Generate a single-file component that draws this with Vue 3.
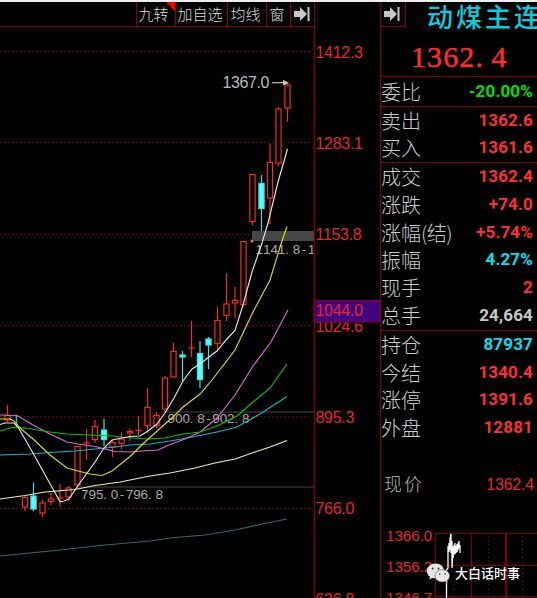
<script setup>
const tools = [
  { label: '九转', width: 39, flagged: true },
  { label: '加自选', width: 52 },
  { label: '均线', width: 39 },
  { label: '窗', width: 24 },
]

const quoteGroups = [
  { height: 30, rows: [{ label: '委比', value: '-20.00%', tone: 'green' }] },
  {
    height: 56,
    rows: [
      { label: '卖出', value: '1362.6', tone: 'red' },
      { label: '买入', value: '1361.6', tone: 'red' },
    ],
  },
  {
    height: 168,
    rows: [
      { label: '成交', value: '1362.4', tone: 'red' },
      { label: '涨跌', value: '+74.0', tone: 'red' },
      { label: '涨幅', note: '(结)', value: '+5.74%', tone: 'red' },
      { label: '振幅', value: '4.27%', tone: 'cyan' },
      { label: '现手', value: '2', tone: 'red' },
      { label: '总手', value: '24,664', tone: 'grey' },
    ],
  },
  {
    height: 112,
    rows: [
      { label: '持仓', value: '87937', tone: 'cyan' },
      { label: '今结', value: '1340.4', tone: 'red' },
      { label: '涨停', value: '1391.6', tone: 'red' },
      { label: '外盘', value: '12881', tone: 'red' },
    ],
  },
]

const bigPrice = '1362.4'.split('')

const gridY = [51.5, 142.5, 234.5, 325.5, 416.5, 508.5]
const axis = [
  ['1412.3', 57.5], ['1283.1', 149], ['1153.8', 240], ['1024.6', 331.5],
  ['895.3', 422.5], ['766.0', 514], ['636.8', 605],
]

// x, high, top, bottom, low, kind (u = rising, d = falling, c = cross)
const candles = [
  [287.5, 83, 85, 108, 122, 'u'], [278.5, 107, 109, 163, 166, 'u'],
  [270, 143.5, 162.5, 198, 224, 'u'], [261.5, 175, 183.5, 208.5, 231, 'd'],
  [252.5, 174, 174.5, 221.5, 225.5, 'u'], [243.5, 241, 241.5, 304.5, 305, 'u'],
  [235, 287, 300.5, 303, 318, 'u'], [226.5, 273.5, 304, 315.5, 321, 'u'],
  [217.5, 307, 320.5, 343.5, 350, 'u'], [208.5, 337, 339, 345, 369, 'd'],
  [200, 341, 353.5, 379.5, 388.5, 'd'], [191.5, 321, 348, 348, 357, 'c'],
  [182.5, 351, 355, 357, 381, 'd'], [173.5, 343, 351.5, 377, 377, 'u'],
  [165, 376, 378, 409, 412, 'u'], [156.5, 412, 415.5, 425.5, 428, 'u'],
  [147.5, 388, 407.5, 425.5, 433, 'u'], [138.5, 416, 430.5, 430.5, 435, 'c'],
  [130, 428.5, 431.5, 433, 441, 'u'], [121.5, 432, 439, 443.5, 449, 'u'],
  [112.5, 440, 442.5, 447, 457, 'u'], [104, 418.5, 430, 439.5, 446, 'd'],
  [95, 420, 426.5, 439.5, 443, 'u'], [86.5, 429, 443, 443, 460, 'c'],
  [77.5, 446, 446.5, 485, 488, 'u'], [68.5, 486, 488, 497, 501, 'u'],
  [60, 484, 498, 498, 507, 'c'], [51, 493, 499, 501.5, 505.5, 'u'],
  [42.5, 499.5, 503, 513, 517, 'u'], [33.5, 482.5, 496, 509, 511, 'd'],
  [25, 496, 497.5, 507, 511, 'u'], [7.5, 405, 415.5, 420, 422, 'u'],
]

const averages = [
  { color: '#2c6a70', points: '0,556 60,550 100,545.5 150,541 170,538 205,535 235,530 260,524.5 287,519' },
  { color: '#eeeea8', points: '0,499 25,495.5 45,492 75,489.5 95,485.5 120,482 150,476 170,473 195,468 215,463 235,459 255,452 270,447 287,440.5' },
  { color: '#10b8cc', points: '0,455 30,454 50,452.5 75,451 100,448.5 115,447 130,445 150,444 170,441 195,436.5 217,432 237,427 260,414 287,396.5' },
  { color: '#d868d8', points: '0,415 17,415.5 33,425 50,434 67,442 78,444 95,446.5 115,451.5 130,452 143,451 158,450 170,444.5 185,439 200,432 217,418 235,395 253,366 271,342 288,310' },
  { color: '#00c400', points: '0,431 12,427.5 25,428 50,432 67,434 100,435.5 113,436 125,437.5 148,439 165,438 180,434.5 200,432 217,426 237,416 253,402 270,388 287,364' },
  { color: '#e0dc00', points: '0,419 10,419 14,421 20,428 33,439 50,455 67,468 78,471 90,474 102,475.5 112,471 130,456.5 147,440 165,424 174,416 183,407 200,394 212,380 235,350 253,312 270,280 281,244 287,226.5' },
  { color: '#e4e4e4', points: '0,424.5 5,423 14,423 18,427 33,453 60,501.7 64,501 69,499 77,487 95,462 104,448 112,440 122,438 130,436.5 140,436 148,431 157,424 165,413 174,398 183,381 192,369 200,364 209,357 217,351 226,340 235,330.5 243,305 252,272 262,243 268,223 278,182 287.5,149' },
]

const marks = [
  { text: '1141.8-1', x: 255.5, y: 253.5 },
  { text: '900.8-902.8', x: 167.5, y: 423 },
  { text: '795.0-796.8', x: 81, y: 499 },
]
// Fixed-pitch cells; the narrow hyphen is centred in its cell.
const spread = (m) =>
  m.text.split('').map((ch, i) => m.x + i * 7.45 + (ch === '-' ? 1.6 : 0)).join(' ')
</script>

<template>
  <main class="terminal">
    <section class="chart">
      <nav class="toolbar">
        <span v-for="t in tools" :key="t.label" class="tool" :class="{ flagged: t.flagged }" :style="{ width: t.width + 'px' }">{{ t.label }}</span>
        <span class="tool arrow">
          <svg width="16" height="16" viewBox="0 0 16 16"><path d="M0 5h6V1l7 7-7 7v-4H0zM13.5 1h2v14h-2z" /></svg>
        </span>
      </nav>
      <svg class="plot" width="380" height="571" viewBox="0 27 380 571">
        <defs>
          <clipPath id="plotArea"><rect x="0" y="27" width="313.5" height="571" /></clipPath>
        </defs>
        <line v-for="y in gridY" :key="y" class="dots" x1="0" x2="312" :y1="y" :y2="y" />
        <path class="level" d="M163 412H314M77 487H314" />
        <rect class="band" x="252" y="231" width="62" height="10" />
        <g v-for="c in candles" :key="c[0]" :class="c[5] === 'd' ? 'down' : 'up'">
          <line :x1="c[0]" :x2="c[0]" :y1="c[1]" :y2="c[2]" />
          <line :x1="c[0]" :x2="c[0]" :y1="c[3]" :y2="c[4]" />
          <line v-if="c[5] === 'c'" :x1="c[0] - 3.2" :x2="c[0] + 3.2" :y1="c[2]" :y2="c[2]" />
          <rect v-else :x="c[0] - 2.6" :y="c[2]" width="5.2" :height="c[3] - c[2]" />
        </g>
        <path class="teal-tick" d="M16.5 415V427" />
        <g clip-path="url(#plotArea)">
          <text v-for="m in marks" :key="m.text" class="mark" :x="spread(m)" :y="m.y">{{ m.text }}</text>
        </g>
        <polyline v-for="a in averages" :key="a.color" class="average" :stroke="a.color" :points="a.points" />
        <circle class="pin" cx="252" cy="241" r="1.6" />
        <text class="peak" x="222.5" y="87.5">1367.0</text>
        <path class="pointer" d="M272 82.7H284" />
        <path class="pointer-head" d="M283 80l6 2.7-6 2.7z" />
        <text v-for="a in axis" :key="a[0]" class="axis" x="315.5" :y="a[1]">{{ a[0] }}</text>
        <rect class="cursor" x="314" y="300.5" width="66" height="21.5" />
        <text class="axis" x="315.5" y="316.3">1044.0</text>
        <path class="rule" d="M314.3 27V598" />
      </svg>
    </section>

    <aside class="quote">
      <header class="head">
        <span class="corner">
          <svg width="16" height="16" viewBox="0 0 16 16"><path d="M0 5h6V1l7 7-7 7v-4H0zM13.5 1h2v14h-2z" /></svg>
        </span>
        <h1 class="name">动煤主连</h1>
      </header>
      <div class="price"><span v-for="(d, i) in bigPrice" :key="i" class="digit">{{ d }}</span></div>
      <div v-for="(g, i) in quoteGroups" :key="i" class="group" :style="{ height: g.height + 'px' }">
        <div v-for="r in g.rows" :key="r.label" class="row">
          <span class="label">{{ r.label }}<span v-if="r.note" class="note">{{ r.note }}</span></span>
          <b class="value" :class="r.tone">{{ r.value }}</b>
        </div>
      </div>
      <div class="last"><span>现价</span><span class="last-value">1362.4</span></div>
      <svg class="mini" width="156" height="73" viewBox="381 525 156 73">
        <path class="mini-grid" d="M435.5 598V533.5H537M435.5 565.5H537M435.5 596.5H537M471.5 533V598" />
        <path class="mini-thick" d="M506 533V598" />
        <path class="mini-dots" d="M454 536V598M488.5 536V598M522.5 536V598" />
        <text class="mini-text" x="386" y="540.5">1366.0</text>
        <text class="mini-text" x="386" y="571.5">1356.2</text>
        <text class="mini-text" x="386" y="602.5">1346.7</text>
        <path class="mini-line" d="M446.5 598V570L448 568V546L449 552V543L450 550V539L451 534V553L452 541V568L453 547V558L454 545V555L455 543V554L456 546V553L457 544V552L458 543V550L459 541V548L460 545V553" />
        <g class="chat">
          <path d="M435.5 563.5c-4.800 0-8.600 3.400-8.600 7.500 0 2.400 1.200 4.400 3.200 5.800l-.9 2.800 3.200-1.700c1 .3 2 .4 3.100.4 4.800 0 8.600-3.200 8.600-7.300s-3.800-7.500-8.600-7.500z" />
          <path class="front" d="M442.3 569.7c-4.200 0-7.300 2.700-7.300 6.100s3.100 6.200 7.300 6.200c1 0 1.900-.2 2.700-.4l2.700 1.400-.7-2.300c1.600-1.200 2.600-2.900 2.600-4.900 0-3.400-3.100-6.100-7.300-6.100z" />
          <g class="eyes"><circle cx="432.7" cy="568.5" r="1" /><circle cx="438.5" cy="568.5" r="1" /><circle cx="439.7" cy="574" r=".8" /><circle cx="445" cy="574" r=".8" /></g>
        </g>
        <text class="credit" x="455" y="578">大白话时事</text>
      </svg>
    </aside>
  </main>
</template>

<style>
body { background: #000; overflow: hidden; }
</style>

<style scoped>
.terminal {
  box-sizing: border-box;
  width: 537px;
  height: 598px;
  display: flex;
  overflow: hidden;
  background: #000;
  border-top: 2px solid #eceef0;
  font-family: "Liberation Sans", "Noto Sans CJK SC", sans-serif;
}
.chart { width: 380px; flex: none; display: flex; flex-direction: column; }
.toolbar {
  box-sizing: border-box;
  height: 25px;
  width: 315px;
  display: flex;
  justify-content: flex-end;
  border-bottom: 1px solid #8a0000;
  border-right: 1px solid #8a0000;
}
.tool {
  box-sizing: border-box;
  border-left: 1px solid #8a0000;
  display: flex;
  align-items: center;
  justify-content: center;
  padding-right: 3px;
  white-space: nowrap;
  font: 300 15px/24px "Noto Sans CJK SC", sans-serif;
  color: #dcdcdc;
  position: relative;
}
.flagged { padding-right: 5px; }
.flagged::after {
  content: "";
  position: absolute;
  top: 0;
  right: 0;
  border-top: 9px solid #f00;
  border-left: 9px solid transparent;
}
.arrow { width: 24px; padding-right: 1px; }
.arrow svg, .corner svg { fill: #c8c8c8; }
.plot { display: block; flex: none; }
.dots { stroke: #900000; stroke-width: 1; stroke-dasharray: 1.5 2.5; }
.level { stroke: #484848; fill: none; }
.band { fill: #464646; }
.up { stroke: #f02c2c; fill: #000; stroke-width: 1.2; }
.down { stroke: #40dede; fill: #54ffff; stroke-width: 1.2; }
.teal-tick { stroke: #40b8a8; stroke-width: 1.5; }
.average { fill: none; stroke-width: 1.15; }
.mark { font-size: 13.5px; fill: #aaa; }
.pin { fill: #b09090; stroke: #802020; stroke-width: .8; }
.peak { font-size: 16px; letter-spacing: -.4px; fill: #bcbcbc; }
.pointer { stroke: #c0c0c0; stroke-width: 1.2; }
.pointer-head { fill: #c8c8c8; }
.axis { font-size: 16px; letter-spacing: -.3px; fill: #e02a2a; }
.cursor { fill: #400080; stroke: #8a0030; }
.rule { stroke: #8a0000; stroke-width: 1.3; }

.quote {
  box-sizing: border-box;
  width: 157px;
  flex: none;
  border-left: 1px solid #8a0000;
  display: flex;
  flex-direction: column;
}
.head { display: flex; height: 25px; flex: none; }
.corner {
  box-sizing: border-box;
  width: 25px;
  height: 25px;
  flex: none;
  display: flex;
  align-items: center;
  padding-left: 3px;
  border-right: 1px solid #8a0000;
  border-bottom: 1px solid #8a0000;
}
.name {
  margin: 0 0 0 21px;
  font: 500 26px/27px "Noto Sans CJK SC", sans-serif;
  letter-spacing: 3px;
  white-space: nowrap;
  color: #00d0e0;
}
.price {
  height: 49px;
  flex: none;
  display: flex;
  padding-left: 30px;
  font: 30px/60px "Liberation Serif", serif;
  color: #ff2c2c;
  -webkit-text-stroke: .5px #ff2c2c;
}
.digit { width: 16.1px; }
.group {
  box-sizing: border-box;
  border-top: 1px solid #8a0000;
  flex: none;
  display: flex;
  flex-direction: column;
}
.group:last-of-type { border-bottom: 1px solid #8a0000; }
.row {
  flex: 1;
  min-height: 0;
  display: flex;
  align-items: center;
  justify-content: space-between;
  padding: 0 4px 0 0;
}
.label {
  font: 300 20px/26px "Noto Sans CJK SC", sans-serif;
  color: #ccc;
  white-space: nowrap;
}
.note { letter-spacing: -.5px; }
.value { font: 700 17px/26px Roboto, sans-serif; letter-spacing: .15px; position: relative; top: -1px; }
.red { color: #ff3030; }
.green { color: #00e000; }
.cyan { color: #00e0f0; }
.grey { color: #c8c8c8; }
.last {
  box-sizing: border-box;
  display: flex;
  align-items: center;
  justify-content: space-between;
  height: 83px;
  flex: none;
  padding: 0 3px 1px;
  font: 300 18px/28px "Noto Sans CJK SC", sans-serif;
  letter-spacing: 2px;
  color: #b8b8b8;
}
.last-value { font: 16px/28px "Liberation Sans", sans-serif; letter-spacing: -.2px; color: #e02a2a; padding-top: 3px; }
.mini { display: block; flex: none; }
.mini-grid { fill: none; stroke: #800000; }
.mini-thick { stroke: #800000; stroke-width: 2; }
.mini-dots { stroke: #800000; stroke-dasharray: 1.5 2.5; }
.mini-text { font-size: 15.5px; letter-spacing: -.2px; fill: #e02a2a; }
.mini-line { fill: none; stroke: #fff; stroke-width: 1.3; }
.chat { fill: #e6e6e6; }
.front { stroke: #555; stroke-width: .6; }
.eyes { fill: #333; }
.credit { font: 500 13px "Noto Sans CJK SC", sans-serif; fill: #fff; }
</style>
